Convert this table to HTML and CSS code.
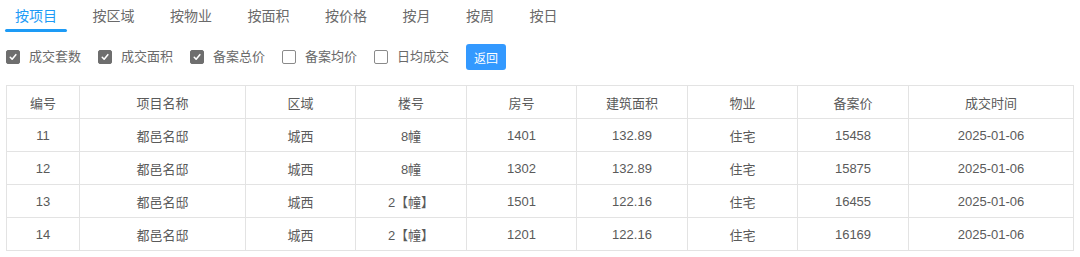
FILE: index.html
```html
<!DOCTYPE html>
<html lang="zh">
<head>
<meta charset="utf-8">
<link rel="stylesheet" href="styles.css">
</head>
<body>
<div class="page">
  <nav class="tabs">
    <span class="tab active">按项目</span>
    <span class="tab">按区域</span>
    <span class="tab">按物业</span>
    <span class="tab">按面积</span>
    <span class="tab">按价格</span>
    <span class="tab">按月</span>
    <span class="tab">按周</span>
    <span class="tab">按日</span>
  </nav>
  <div class="filters">
    <label class="check"><span class="box checked"><svg viewBox="0 0 14 14"><path d="M3.8 7.3 L6 9.6 L10.3 4.3" fill="none" stroke="#fff" stroke-width="1.8" stroke-linecap="round" stroke-linejoin="round"/></svg></span><span class="lbl">成交套数</span></label>
    <label class="check"><span class="box checked"><svg viewBox="0 0 14 14"><path d="M3.8 7.3 L6 9.6 L10.3 4.3" fill="none" stroke="#fff" stroke-width="1.8" stroke-linecap="round" stroke-linejoin="round"/></svg></span><span class="lbl">成交面积</span></label>
    <label class="check"><span class="box checked"><svg viewBox="0 0 14 14"><path d="M3.8 7.3 L6 9.6 L10.3 4.3" fill="none" stroke="#fff" stroke-width="1.8" stroke-linecap="round" stroke-linejoin="round"/></svg></span><span class="lbl">备案总价</span></label>
    <label class="check"><span class="box"></span><span class="lbl">备案均价</span></label>
    <label class="check"><span class="box"></span><span class="lbl">日均成交</span></label>
    <button class="btn">返回</button>
  </div>
  <table class="grid">
    <colgroup>
      <col class="c1"><col class="c2"><col class="c3"><col class="c4"><col class="c5"><col class="c6"><col class="c7"><col class="c8"><col class="c9">
    </colgroup>
    <thead>
      <tr><th>编号</th><th>项目名称</th><th>区域</th><th>楼号</th><th>房号</th><th>建筑面积</th><th>物业</th><th>备案价</th><th>成交时间</th></tr>
    </thead>
    <tbody>
      <tr><td>11</td><td>都邑名邸</td><td>城西</td><td>8幢</td><td>1401</td><td>132.89</td><td>住宅</td><td>15458</td><td>2025-01-06</td></tr>
      <tr><td>12</td><td>都邑名邸</td><td>城西</td><td>8幢</td><td>1302</td><td>132.89</td><td>住宅</td><td>15875</td><td>2025-01-06</td></tr>
      <tr><td>13</td><td>都邑名邸</td><td>城西</td><td>2【幢】</td><td>1501</td><td>122.16</td><td>住宅</td><td>16455</td><td>2025-01-06</td></tr>
      <tr><td>14</td><td>都邑名邸</td><td>城西</td><td>2【幢】</td><td>1201</td><td>122.16</td><td>住宅</td><td>16169</td><td>2025-01-06</td></tr>
    </tbody>
  </table>
</div>
</body>
</html>
```

FILE: styles.css
```css
* { box-sizing: border-box; }
html, body { margin: 0; padding: 0; background: #fff; }
body {
  font-family: "Liberation Sans", "Noto Sans CJK SC", sans-serif;
  color: #606266;
}
.page { width: 1080px; }

.tabs {
  display: flex;
  gap: 35.5px;
  padding: 6px 0 0 15px;
  height: 32px;
}
.tab {
  position: relative;
  font-size: 14px;
  line-height: 20px;
  height: 26px;
  color: #6a6a6a;
}
.tab.active { color: #1d9bf6; }
.tab.active::after {
  content: "";
  position: absolute;
  left: -10px;
  right: -10px;
  top: 23px;
  height: 2.5px;
  border-radius: 2px;
  background: #1d9bf6;
}

.filters {
  display: flex;
  align-items: center;
  gap: 17px;
  padding-left: 6px;
  margin-top: 12px;
  height: 26px;
}
.check {
  display: flex;
  align-items: center;
  gap: 9px;
  font-size: 13px;
  color: #6a6a6a;
}
.box {
  width: 14px;
  height: 14px;
  border: 1px solid #8a8a8a;
  border-radius: 2px;
  background: #fff;
  display: flex;
}
.box.checked { background: #6e6e6e; border-color: #6e6e6e; }
.box svg { width: 12px; height: 12px; }
.lbl { line-height: 16px; }
.btn {
  width: 40px;
  height: 26px;
  border: none;
  border-radius: 3px;
  background: #3399ff;
  color: #fff;
  font-family: inherit;
  font-size: 12px;
  padding: 0;
}

.grid {
  margin: 15px 0 0 6px;
  width: 1067px;
  table-layout: fixed;
  border-collapse: collapse;
  font-size: 13px;
  color: #5a5a5a;
}
.c1 { width: 73px; }
.c2 { width: 166px; }
.c3 { width: 110px; }
.c4 { width: 111px; }
.c5 { width: 110px; }
.c6 { width: 111px; }
.c7 { width: 110px; }
.c8 { width: 111px; }
.c9 { width: 165px; }
.grid th, .grid td {
  border: 1px solid #e3e3e3;
  height: 33px;
  padding: 0;
  text-align: center;
  font-weight: normal;
}
```
